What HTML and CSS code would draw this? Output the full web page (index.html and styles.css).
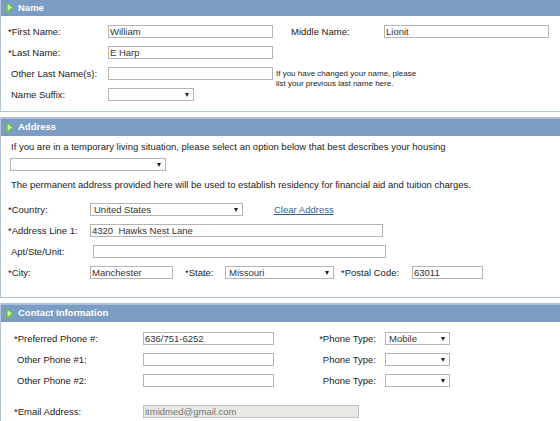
FILE: index.html
```html
<!DOCTYPE html>
<html lang="en">
  <head>
    <meta charset="UTF-8" />
    <meta name="viewport" content="width=device-width,initial-scale=1.0" />
    <title>Personal Information</title>
    <link rel="stylesheet" href="styles.css">
  </head>
  <body>
    <div class="page">

      <!-- Name -->
      <div class="box">
        <div class="box-head">
          <svg class="arrow" width="8" height="11" viewBox="0 0 8 11"><polygon points="1,1 7,5.5 1,10" /></svg>
          Name
        </div>
        <div class="box-body name-grid">
          <span class="lbl">*First Name:</span>
          <div class="edit w-name">William</div>
          <span class="lbl middle">Middle Name:</span>
          <div class="edit w-name">Lionit</div>

          <span class="lbl">*Last Name:</span>
          <div class="edit w-name">E Harp</div>
          <span></span>
          <span></span>

          <span class="lbl opt">Other Last Name(s):</span>
          <div class="edit w-name"></div>
          <p class="note">If you have changed your name, please<br>list your previous last name here.</p>

          <span class="lbl opt">Name Suffix:</span>
          <div class="drop w-suffix"><span></span><i class="caret"></i></div>
        </div>
      </div>

      <!-- Address -->
      <div class="box">
        <div class="box-head">
          <svg class="arrow" width="8" height="11" viewBox="0 0 8 11"><polygon points="1,1 7,5.5 1,10" /></svg>
          Address
        </div>
        <div class="box-body addr">
          <p class="text">If you are in a temporary living situation, please select an option below that best describes your housing</p>
          <div class="drop w-housing"><span></span><i class="caret"></i></div>
          <p class="text second">The permanent address provided here will be used to establish residency for financial aid and tuition charges.</p>

          <div class="row">
            <span class="lbl w-addr">*Country:</span>
            <div class="drop w-country"><span>United States</span><i class="caret"></i></div>
            <a href="#" class="clear">Clear Address</a>
          </div>
          <div class="row">
            <span class="lbl w-addr">*Address Line 1:</span>
            <div class="edit w-line">4320&nbsp; Hawks Nest Lane</div>
          </div>
          <div class="row">
            <span class="lbl opt w-addr">Apt/Ste/Unit:</span>
            <div class="edit w-line"></div>
          </div>
          <div class="row">
            <span class="lbl w-addr">*City:</span>
            <div class="edit w-city">Manchester</div>
            <span class="lbl w-state">*State:</span>
            <div class="drop w-statesel"><span>Missouri</span><i class="caret"></i></div>
            <span class="lbl w-postal">*Postal Code:</span>
            <div class="edit w-zip">63011</div>
          </div>
        </div>
      </div>

      <!-- Contact Information -->
      <div class="box">
        <div class="box-head">
          <svg class="arrow" width="8" height="11" viewBox="0 0 8 11"><polygon points="1,1 7,5.5 1,10" /></svg>
          Contact Information
        </div>
        <div class="box-body contact-grid">
          <span class="lbl">*Preferred Phone #:</span>
          <div class="edit w-phone">636/751-6252</div>
          <span class="lbl right">*Phone Type:</span>
          <div class="drop w-type"><span>Mobile</span><i class="caret"></i></div>

          <span class="lbl opt">Other Phone #1:</span>
          <div class="edit w-phone"></div>
          <span class="lbl right">Phone Type:</span>
          <div class="drop w-type"><span></span><i class="caret"></i></div>

          <span class="lbl opt">Other Phone #2:</span>
          <div class="edit w-phone"></div>
          <span class="lbl right">Phone Type:</span>
          <div class="drop w-type"><span></span><i class="caret"></i></div>

          <span class="lbl email-lbl">*Email Address:</span>
          <div class="edit readonly w-email email-field">itmidmed@gmail.com</div>
        </div>
      </div>

    </div>
  </body>
</html>
```

FILE: styles.css
```css
html, body {
  margin: 0;
  overflow: hidden;
  background: #fff;
}
body {
  font-family: "Liberation Sans", Arial, sans-serif;
  font-size: 9.5px;
  color: #222;
}
p {
  margin: 0;
}
.page {
  margin-top: -3px;
}

/* group boxes */
.box {
  border: 1px solid #b4c5d6;
  border-right: none;
  margin-bottom: 5px;
}
.box-head {
  height: 18px;
  line-height: 18px;
  background: #7b9dc3;
  border-top: 1px solid #a9c0da;
  box-sizing: border-box;
  color: #fff;
  font-weight: bold;
  font-size: 9.5px;
  padding-left: 5px;
  display: flex;
  align-items: center;
  gap: 4px;
}
.arrow polygon {
  fill: #dcefc6;
  stroke: #6cbf34;
  stroke-width: 1.4;
}

/* labels and fields */
.lbl {
  white-space: nowrap;
}
.lbl.opt {
  padding-left: 3px;
}
.lbl.right {
  text-align: right;
  padding-right: 9px;
}
.edit, .drop {
  box-sizing: border-box;
  height: 13px;
  border: 1px solid #b5b5b5;
  background: #fff;
  font-size: 9.5px;
  line-height: 11px;
  padding-left: 1px;
  color: #333;
  white-space: nowrap;
  overflow: hidden;
}
.edit.readonly {
  background: #e9e9e5;
  color: #777;
  border-color: #c2c2bd;
}
.drop {
  position: relative;
  padding-left: 3px;
}
.caret {
  position: absolute;
  right: 4px;
  top: 4px;
  width: 0;
  height: 0;
  border-left: 2.5px solid transparent;
  border-right: 2.5px solid transparent;
  border-top: 4px solid #222;
}

/* Name */
.name-grid {
  display: grid;
  grid-template-columns: 100px 168px 108px 165px;
  grid-auto-rows: 20.7px;
  align-items: center;
  padding: 5.6px 0 6.4px 7px;
}
.w-name { width: 165px; }
.w-suffix { width: 86px; }
.middle {
  padding-left: 15px;
}
.note {
  grid-column: 3 / span 2;
  grid-row: 3 / span 2;
  align-self: start;
  margin-top: 6.5px;
  font-size: 8px;
  line-height: 10px;
}

/* Address */
.addr {
  padding: 5px 0 14.5px 7px;
}
.text {
  line-height: 12px;
  padding-left: 3px;
}
.w-housing {
  width: 156px;
  margin: 5.3px 0 0 2px;
}
.text.second {
  margin-top: 8px;
  margin-bottom: 8.6px;
}
.row {
  display: flex;
  align-items: center;
  height: 20.7px;
}
.w-addr { width: 82px; }
.w-country { width: 153px; }
.w-line { width: 293px; }
.w-city { width: 83px; }
.w-state {
  width: 40px;
  margin-left: 12px;
}
.w-statesel { width: 109px; }
.w-postal {
  width: 71px;
  margin-left: 7px;
}
.w-zip { width: 71px; }
.clear {
  margin-left: 31px;
  color: #2f5f96;
  text-decoration: underline;
}

/* Contact */
.contact-grid {
  display: grid;
  grid-template-columns: 129px 131px 111px 65px;
  grid-template-rows: 20.7px 20.7px 20.7px 11px 20.7px;
  align-items: center;
  padding: 6.45px 0 30px 13px;
}
.w-phone { width: 131px; }
.w-type { width: 65px; }
.email-lbl {
  grid-row: 5;
  grid-column: 1;
}
.email-field {
  grid-row: 5;
  grid-column: 2 / span 3;
  width: 216px;
}
```
